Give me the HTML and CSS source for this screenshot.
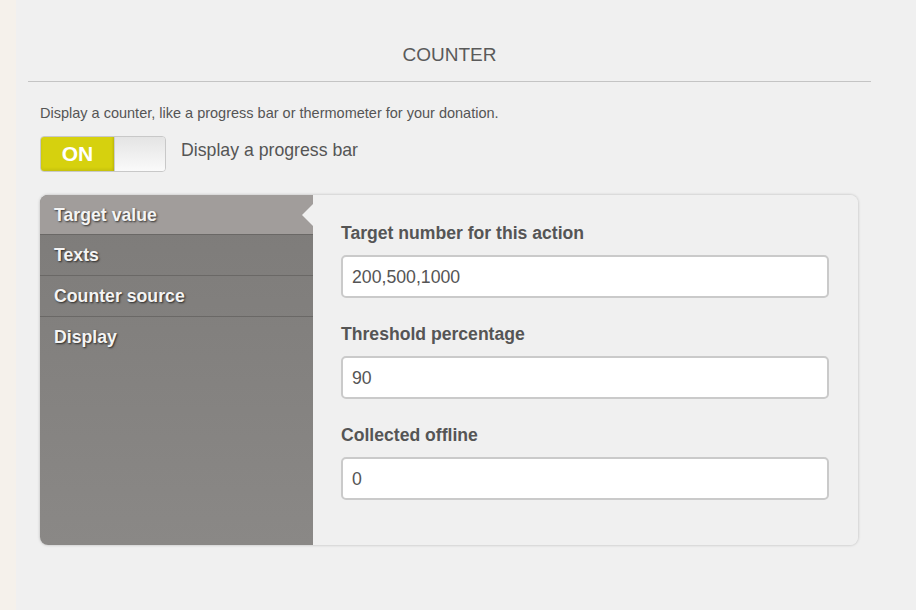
FILE: index.html
```html
<!DOCTYPE html>
<html>
<head>
<meta charset="utf-8">
<link rel="stylesheet" href="styles.css">
</head>
<body>
<div class="strip"></div>
<div class="main">
  <h1 class="title">COUNTER</h1>
  <div class="section">
    <p class="desc">Display a counter, like a progress bar or thermometer for your donation.</p>
    <div class="toggle-row">
      <div class="toggle"><span class="on">ON</span><span class="knob"></span></div>
      <span class="toggle-label">Display a progress bar</span>
    </div>
    <div class="panel">
      <ul class="tabs">
        <li class="tab active">Target value</li>
        <li class="tab">Texts</li>
        <li class="tab">Counter source</li>
        <li class="tab last">Display</li>
      </ul>
      <div class="content">
        <div class="field">
          <label class="label">Target number for this action</label>
          <div class="input">200,500,1000</div>
        </div>
        <div class="field">
          <label class="label">Threshold percentage</label>
          <div class="input">90</div>
        </div>
        <div class="field">
          <label class="label">Collected offline</label>
          <div class="input">0</div>
        </div>
      </div>
    </div>
  </div>
</div>
</body>
</html>
```
FILE: styles.css
```css
html, body { margin: 0; padding: 0; }
body {
  display: flex;
  background: #f0f0f0;
  font-family: "Liberation Sans", Arial, sans-serif;
  color: #555;
  height: 610px;
  overflow: hidden;
}
.strip { width: 16px; background: #f5f1eb; flex: none; }
.main { flex: 1; padding: 0 45px 0 12px; }
.title {
  margin: 0;
  padding-top: 44px;
  height: 37px;
  border-bottom: 1px solid #c4c4c4;
  text-align: center;
  font-size: 19px;
  font-weight: normal;
  line-height: 22px;
  color: #5a5a5a;
}
.section { padding: 0 13px 0 12px; }
.desc { margin: 23px 0 0; font-size: 14.5px; line-height: 17px; color: #555; }
.toggle-row { display: flex; align-items: flex-start; margin-top: 14px; }
.toggle {
  width: 124px; height: 34px;
  border: 1px solid #c8c8c8;
  border-radius: 4px;
  display: flex; overflow: hidden;
}
.on {
  width: 73px;
  background: #d6d10e;
  color: #fff;
  font-weight: bold; font-size: 21px;
  line-height: 34px;
  text-align: center;
  box-shadow: inset 0 -2px 3px rgba(0,0,0,0.08);
}
.knob {
  flex: 1;
  background: linear-gradient(#e4e4e4, #fafafa);
  border-left: 1px solid #ccc;
  box-shadow: -1px 0 2px rgba(0,0,0,0.1);
}
.toggle-label { margin-left: 15px; font-size: 17.7px; line-height: 22px; margin-top: 3px; color: #555; }
.panel {
  margin-top: 23px;
  width: 818px; height: 350px;
  display: flex;
  border-radius: 8px;
  box-shadow: 0 0 3px rgba(0,0,0,0.25);
  overflow: hidden;
}
.tabs {
  list-style: none; margin: 0; padding: 0;
  width: 273px; flex: none;
  background: linear-gradient(#7d7b79, #8a8886);
}
.tab {
  height: 40px;
  border-bottom: 1px solid #6a6866;
  padding-left: 14px;
  color: #f4f4f4;
  font-weight: bold; font-size: 17.7px;
  line-height: 41px;
  text-shadow: 1px 1px 2px rgba(0,0,0,0.7);
  position: relative;
}
.tab.last { border-bottom: none; }
.tab.active { background: #a19d9b; height: 39px; line-height: 40px; }
.tab.active::after {
  content: "";
  position: absolute; right: 0; top: 9px;
  border-style: solid; border-width: 11px 11px 11px 0;
  border-color: transparent #f0f0f0 transparent transparent;
}
.content {
  flex: 1;
  background: #f0f0f0;
  padding: 28px 29px 0 28px;
}
.field { margin-bottom: 26px; }
.label { display: block; font-weight: bold; font-size: 17.6px; line-height: 20px; color: #555; margin-bottom: 12px; }
.input {
  height: 39px;
  border: 2px solid #cacaca;
  border-radius: 5px;
  background: #fff;
  padding-left: 9px;
  font-size: 17.7px; line-height: 41px;
  color: #555;
}
```
